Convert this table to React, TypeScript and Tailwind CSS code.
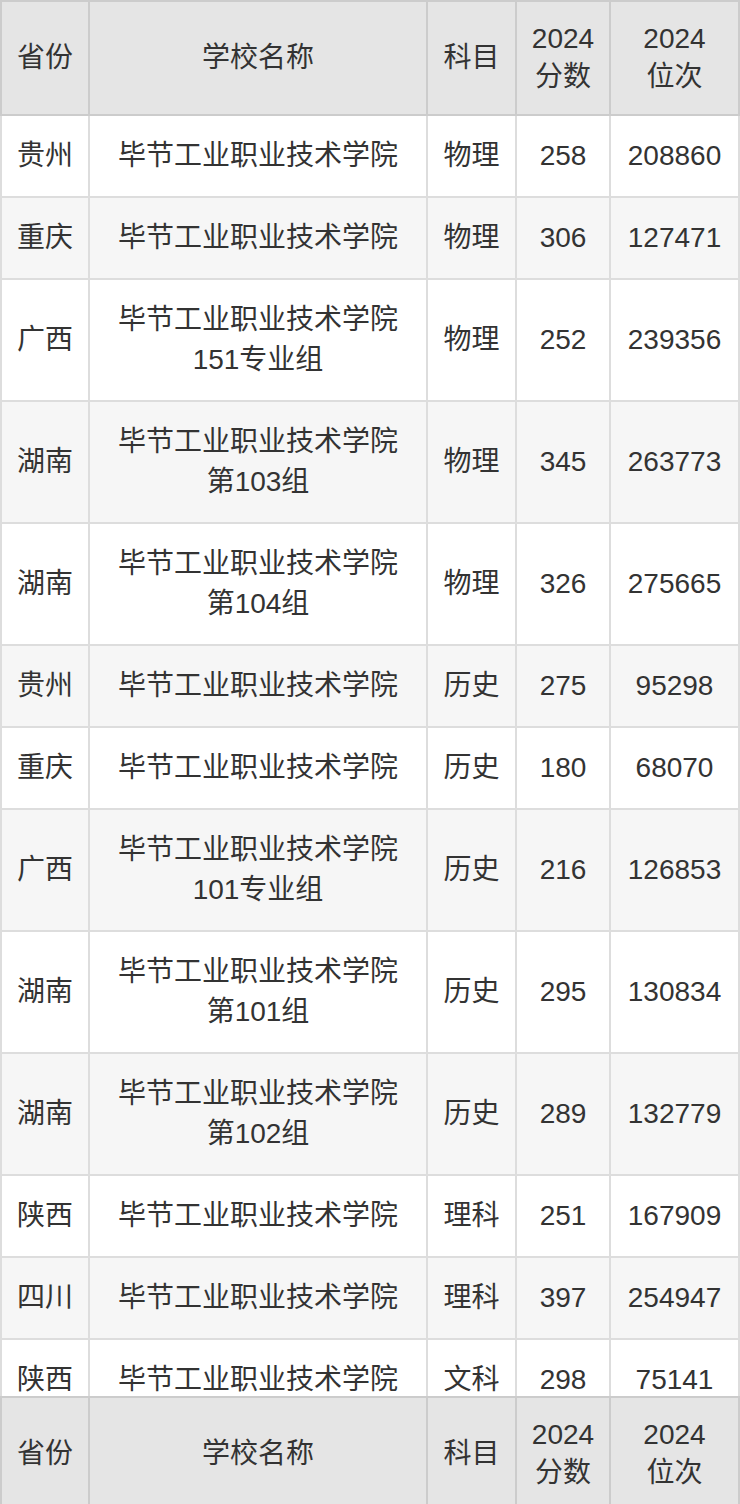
// App.tsx
// 2024 admission scores table with a repeated header pinned at the bottom

const rows = [
  { prov: "贵州", name: ["毕节工业职业技术学院"], subj: "物理", score: "258", rank: "208860" },
  { prov: "重庆", name: ["毕节工业职业技术学院"], subj: "物理", score: "306", rank: "127471" },
  { prov: "广西", name: ["毕节工业职业技术学院", "151专业组"], subj: "物理", score: "252", rank: "239356" },
  { prov: "湖南", name: ["毕节工业职业技术学院", "第103组"], subj: "物理", score: "345", rank: "263773" },
  { prov: "湖南", name: ["毕节工业职业技术学院", "第104组"], subj: "物理", score: "326", rank: "275665" },
  { prov: "贵州", name: ["毕节工业职业技术学院"], subj: "历史", score: "275", rank: "95298" },
  { prov: "重庆", name: ["毕节工业职业技术学院"], subj: "历史", score: "180", rank: "68070" },
  { prov: "广西", name: ["毕节工业职业技术学院", "101专业组"], subj: "历史", score: "216", rank: "126853" },
  { prov: "湖南", name: ["毕节工业职业技术学院", "第101组"], subj: "历史", score: "295", rank: "130834" },
  { prov: "湖南", name: ["毕节工业职业技术学院", "第102组"], subj: "历史", score: "289", rank: "132779" },
  { prov: "陕西", name: ["毕节工业职业技术学院"], subj: "理科", score: "251", rank: "167909" },
  { prov: "四川", name: ["毕节工业职业技术学院"], subj: "理科", score: "397", rank: "254947" },
  { prov: "陕西", name: ["毕节工业职业技术学院"], subj: "文科", score: "298", rank: "75141" },
];

const Cols = () => (
  <colgroup>
    <col className="w-[88px]" />
    <col className="w-[338px]" />
    <col className="w-[89px]" />
    <col className="w-[94px]" />
    <col className="w-[129px]" />
  </colgroup>
);

const th = "border-2 border-[#cccccc] bg-[#e5e5e5] py-[18px] leading-[38px] font-normal text-center align-middle";
const td = "border-2 border-[#dddddd] py-[20px] leading-[40px] text-center align-middle";

const HeaderRow = () => (
  <tr>
    <th className={th}>省份</th>
    <th className={th}>学校名称</th>
    <th className={th}>科目</th>
    <th className={th}>
      2024
      <br />
      分数
    </th>
    <th className={th}>
      2024
      <br />
      位次
    </th>
  </tr>
);

export default function App() {
  return (
    <div
      className="w-[740px] h-[1504px] overflow-hidden bg-white text-[28px] text-[#333333]"
      style={{ fontFamily: '"Liberation Sans", "Noto Sans CJK SC", sans-serif' }}
    >
      <div className="h-[1397px] overflow-hidden">
        <table className="w-[740px] table-fixed border-collapse">
          <Cols />
          <thead>
            <HeaderRow />
          </thead>
          <tbody>
            {rows.map((r, i) => (
              <tr key={i} className={i % 2 === 1 ? "bg-[#f6f6f6]" : "bg-white"}>
                <td className={td}>{r.prov}</td>
                <td className={td}>
                  {r.name.map((n, j) => (
                    <div key={j}>{n}</div>
                  ))}
                </td>
                <td className={td}>{r.subj}</td>
                <td className={td}>{r.score}</td>
                <td className={td}>{r.rank}</td>
              </tr>
            ))}
          </tbody>
        </table>
      </div>

      {/* repeated header at the bottom */}
      <table className="w-[740px] table-fixed border-collapse -mt-[1px]">
        <Cols />
        <tbody>
          <HeaderRow />
        </tbody>
      </table>
    </div>
  );
}
